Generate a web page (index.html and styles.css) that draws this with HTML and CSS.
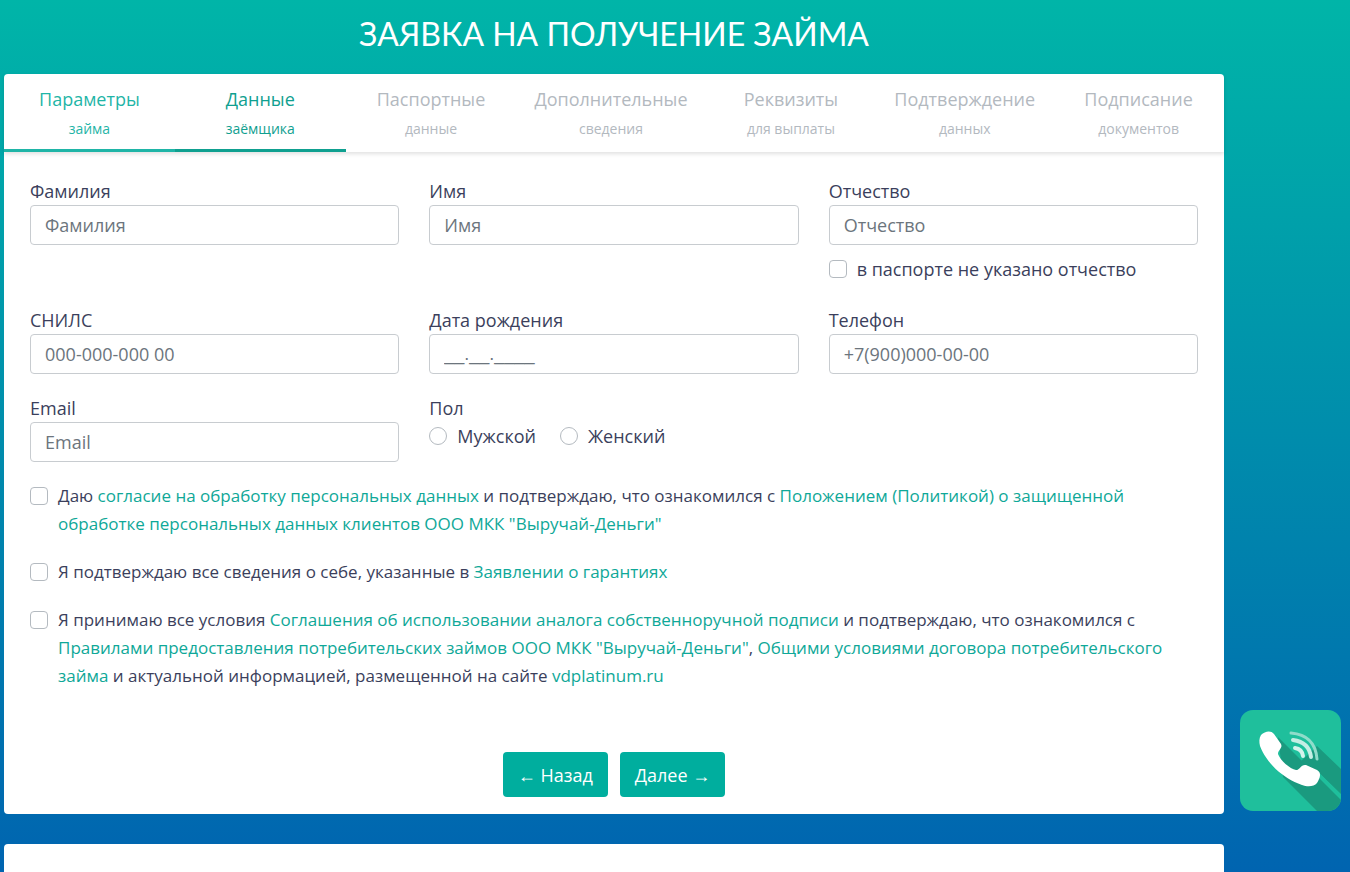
FILE: index.html
```html
<!DOCTYPE html>
<html lang="ru">
<head>
    <meta charset="UTF-8">
    <meta name="viewport" content="width=device-width, initial-scale=1.0">
    <title>Заявка на получение займа</title>
    <link rel="stylesheet" href="styles.css">
</head>
<body>
    <main class="container">
        <h1>ЗАЯВКА НА ПОЛУЧЕНИЕ ЗАЙМА</h1>

        <div class="card">
            <ol class="steps">
                <li class="step done">Параметры<small>займа</small></li>
                <li class="step active">Данные<small>заёмщика</small></li>
                <li class="step">Паспортные<small>данные</small></li>
                <li class="step">Дополнительные<small>сведения</small></li>
                <li class="step">Реквизиты<small>для выплаты</small></li>
                <li class="step">Подтверждение<small>данных</small></li>
                <li class="step">Подписание<small>документов</small></li>
            </ol>

            <form class="form">
                <div class="fields">
                    <div class="field">
                        <label for="lastname">Фамилия</label>
                        <input class="text" type="text" id="lastname" placeholder="Фамилия">
                    </div>
                    <div class="field">
                        <label for="firstname">Имя</label>
                        <input class="text" type="text" id="firstname" placeholder="Имя">
                    </div>
                    <div class="field">
                        <label for="middlename">Отчество</label>
                        <input class="text" type="text" id="middlename" placeholder="Отчество">
                        <div class="check no-middlename">
                            <input type="checkbox" id="nomiddle">
                            <label for="nomiddle">в паспорте не указано отчество</label>
                        </div>
                    </div>
                    <div class="field">
                        <label for="snils">СНИЛС</label>
                        <input class="text" type="text" id="snils" placeholder="000-000-000 00">
                    </div>
                    <div class="field">
                        <label for="birthday">Дата рождения</label>
                        <input class="text date" type="text" id="birthday" placeholder="__.__.____">
                    </div>
                    <div class="field">
                        <label for="phone">Телефон</label>
                        <input class="text" type="tel" id="phone" placeholder="+7(900)000-00-00">
                    </div>
                    <div class="field">
                        <label for="email">Email</label>
                        <input class="text" type="email" id="email" placeholder="Email">
                    </div>
                    <div class="field" role="radiogroup" aria-labelledby="sex">
                        <span id="sex">Пол</span>
                        <div class="radios">
                            <div class="check">
                                <input type="radio" name="sex" id="male">
                                <label for="male">Мужской</label>
                            </div>
                            <div class="check">
                                <input type="radio" name="sex" id="female">
                                <label for="female">Женский</label>
                            </div>
                        </div>
                    </div>
                </div>

                <div class="check consent">
                    <input type="checkbox" id="agree1">
                    <label for="agree1">Даю <a href="#">согласие на обработку персональных данных</a> и подтверждаю, что ознакомился с <a href="#">Положением (Политикой) о защищенной обработке персональных данных клиентов ООО МКК "Выручай-Деньги"</a></label>
                </div>
                <div class="check consent">
                    <input type="checkbox" id="agree2">
                    <label for="agree2">Я подтверждаю все сведения о себе, указанные в <a href="#">Заявлении о гарантиях</a></label>
                </div>
                <div class="check consent">
                    <input type="checkbox" id="agree3">
                    <label for="agree3">Я принимаю все условия <a href="#">Соглашения об использовании аналога собственноручной подписи</a> и подтверждаю, что ознакомился с <a href="#">Правилами предоставления потребительских займов ООО МКК "Выручай-Деньги"</a>, <a href="#">Общими условиями договора потребительского займа</a> и актуальной информацией, размещенной на сайте <a href="#">vdplatinum.ru</a></label>
                </div>

                <div class="buttons">
                    <button type="button">← Назад</button>
                    <button type="submit">Далее →</button>
                </div>
            </form>
        </div>

        <div class="card card-next"></div>
    </main>

    <a class="call" href="#" aria-label="Позвонить">
        <svg viewBox="0 0 101 101" width="101" height="101">
            <defs>
                <clipPath id="tile"><rect width="101" height="101" rx="13"/></clipPath>
            </defs>
            <g clip-path="url(#tile)">
                <rect width="101" height="101" fill="#1fbf9c"/>
                <path d="M38 27 101 90V110H86L43 67Z" fill="#1a9a7f"/>
                <path d="M77 36 101 59V84L79 63 60 52Z" fill="#1a9a7f"/>
                <path d="M79 64 101 86" stroke="#1fbf9c" stroke-width="2"/>
                <path d="M21 25C25 21 31 20 34 24L41 34C43 38 38 40 38 44C40 50 50 59 56 60C60 60 61 54 66 55L77 60C82 63 80 68 77 73C74 77 67 77 62 75C42 68 26 52 20 36C19 32 19 28 21 25Z" fill="#fff"/>
                <g fill="none" stroke-linecap="round" stroke-width="4">
                    <path d="M55 38Q62 39 63 46" stroke="#d5f3ec"/>
                    <path d="M53 30Q69 32 71 47" stroke="#c5eee4"/>
                    <path d="M51 23Q75 25 77 49" stroke="#8fdcca" stroke-width="3"/>
                </g>
            </g>
        </svg>
    </a>
</body>
</html>
```
FILE: styles.css
```css
* {
    box-sizing: border-box;
}
body {
    margin: 0;
    min-height: 100vh;
    font-family: "Open Sans", "Noto Sans", sans-serif;
    font-size: 18px;
    line-height: 28px;
    color: #3b3f5c;
    background: linear-gradient(#00b5a8, #0064b0);
}
.container {
    padding: 14px 126px 0 4px;
}
h1 {
    margin: 0 0 20px;
    font-family: Lato, sans-serif;
    font-size: 32px;
    font-weight: 400;
    line-height: 40px;
    text-align: center;
    color: #fff;
}
.card {
    background: #fff;
    border-radius: 4px;
}
.card-next {
    height: 28px;
    margin-top: 30px;
    border-radius: 4px 4px 0 0;
}
a {
    color: #0fa898;
    text-decoration: none;
}

/* steps */
.steps {
    display: flex;
    margin: 0;
    padding: 0;
    list-style: none;
    box-shadow: 0 2px 4px rgba(0,0,0,0.12);
}
.step {
    flex: 1;
    padding: 11px 18px 4px;
    text-align: center;
    color: #b3b9bf;
    border-bottom: 3px solid transparent;
}
.step small {
    display: block;
    font-size: 14px;
    line-height: 32px;
}
.step.done {
    color: #1fb5a7;
    border-color: #1fb5a7;
}
.step.active {
    color: #0fa090;
    border-color: #0fa090;
}

/* form */
.form {
    padding: 25px 26px 17px;
}
.fields {
    display: grid;
    grid-template-columns: repeat(3, 1fr);
    gap: 20px 30px;
    margin-bottom: 20px;
}
.field > label, .field > span {
    display: block;
}
.text {
    display: block;
    width: 100%;
    height: 40px;
    padding: 0 14px;
    font: inherit;
    color: #495057;
    border: 1px solid #c8ccd0;
    border-radius: 4px;
}
.text::placeholder {
    color: #6c757d;
    opacity: 1;
}
.date {
    font-family: "Liberation Sans", Arial, sans-serif;
}
.check {
    display: flex;
    gap: 10px;
}
.check input {
    flex: none;
    appearance: none;
    width: 18px;
    height: 18px;
    margin: 5px 0;
    background: #fff;
    border: 1px solid #b4bac0;
    border-radius: 4px;
}
.check input[type="radio"] {
    border-radius: 50%;
}
.check input:checked {
    background: #00ae9e;
}
.no-middlename {
    margin: 10px 0 3px;
}
.radios {
    display: flex;
    gap: 24px;
}
.consent {
    margin-bottom: 20px;
    font-size: 17px;
}
.buttons {
    display: flex;
    justify-content: center;
    gap: 12px;
    margin-top: 62px;
}
button {
    min-height: 45px;
    padding: 8px 15px;
    font: inherit;
    color: #fff;
    background: #00ae9e;
    border: none;
    border-radius: 4px;
    cursor: pointer;
}
button:hover {
    background: #009486;
}

/* floating call button */
.call {
    position: fixed;
    right: 9px;
    bottom: 61px;
}
.call svg {
    display: block;
}
```
